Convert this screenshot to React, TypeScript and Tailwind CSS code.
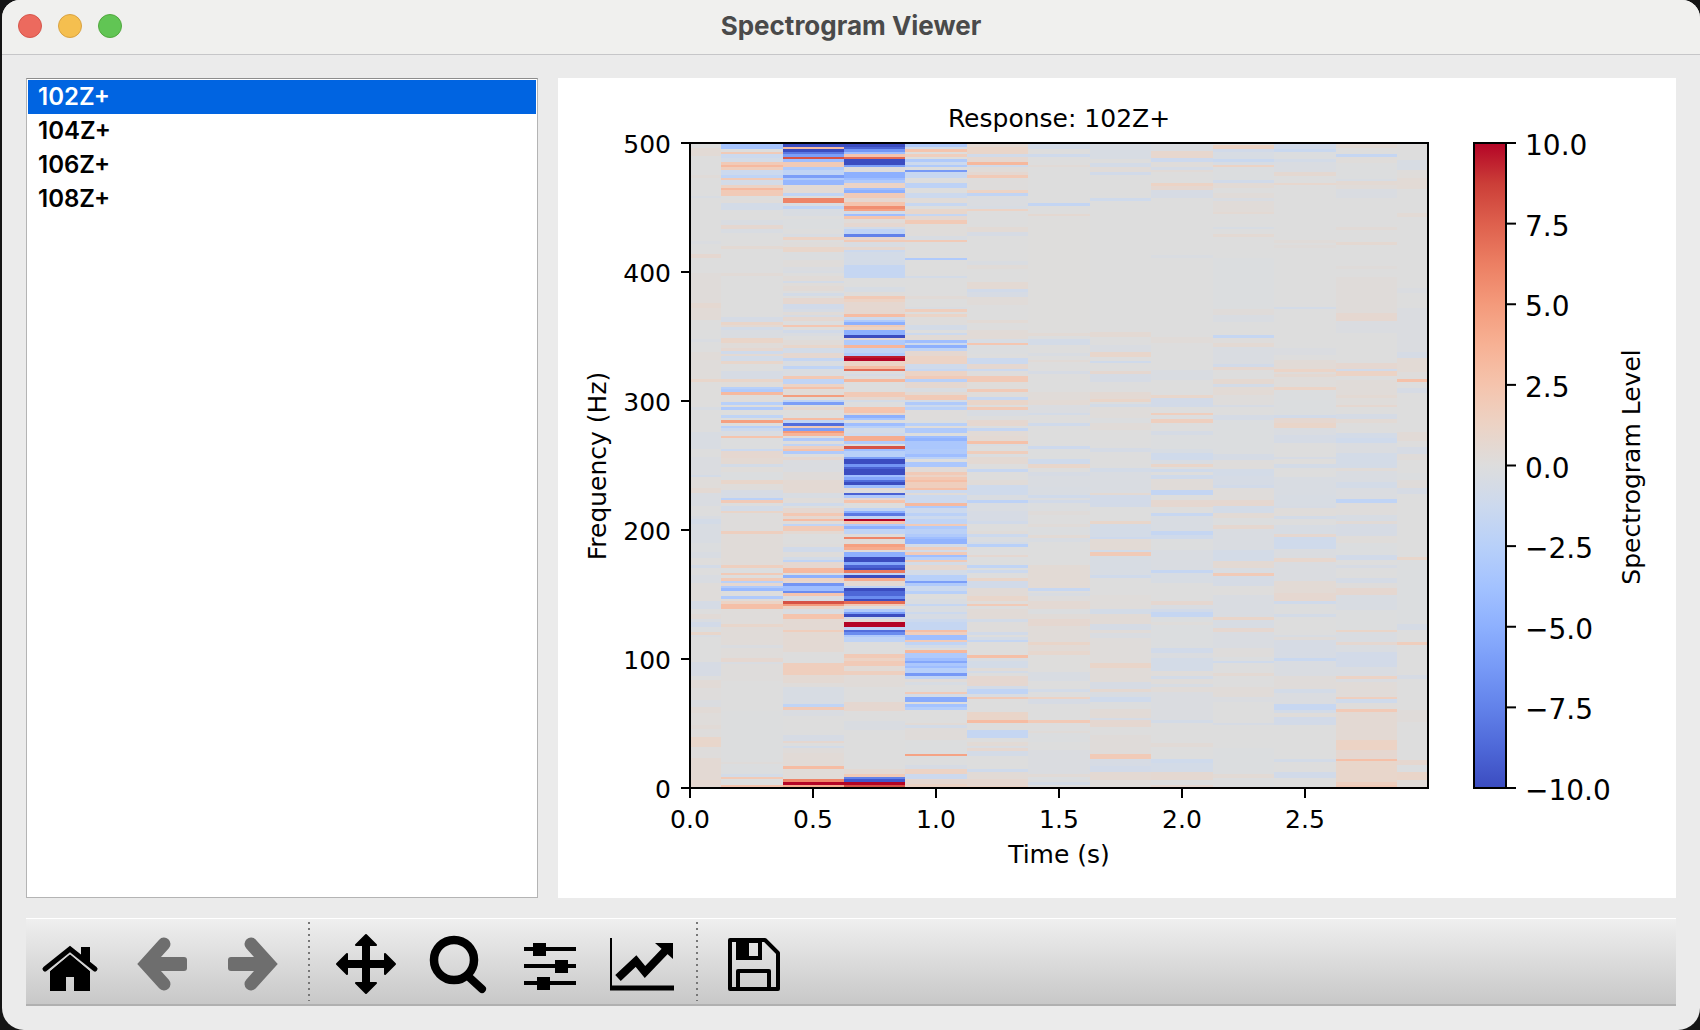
import React, { useState } from 'react'

interface Column {
    x: number
    width: number
    // alternating values: offset from the top of the axes, level from there on
    runs: number[]
}

const AXES = { left: 132, top: 65, width: 738, height: 645 }

const COLUMNS: Column[] = [
    {
        x: 132, width: 31,
        runs: [0, 0, 5, 0.7, 13, 0, 32, 0.5, 35, 0, 53, -0.6, 55, 0, 98, -0.4, 101, 0, 111, 1, 115, 0, 130, 0.4, 160, 0.9, 165, 0.6, 177, 0, 196, -0.5, 199, 0, 209, 0.5, 217, 0.3, 236, 1.2, 239, 0.1, 264, -0.6, 267, 0, 289, -0.6, 306, 0, 314, -0.4, 332, -1, 334, 0.3, 345, 0.8, 350, -0.5, 363, 0, 373, -0.5, 376, -1, 381, -0.6, 400, -0.3, 409, -0.6, 415, 0.1, 422, -1, 425, 0, 432, -0.5, 440, 0.3, 458, -0.9, 466, 0, 471, 0.6, 476, -0.5, 479, -1.1, 484, -0.3, 489, 1.2, 492, -0.5, 494, 0, 519, -0.8, 533, 0, 537, 0.6, 545, 0.2, 557, -0.4, 564, 0.6, 570, 0.3, 582, 0.6, 586, 0.2, 594, 1.2, 604, 0.2, 615, 0.8, 637, 1],
    },
    {
        x: 163, width: 62,
        runs: [0, -3.5, 6, 0, 9, 2, 11, -1.5, 15, -1, 19, 2, 22, 3.2, 24, 1.8, 27, -1.5, 32, -2, 35, 2, 37, -1, 42, 1.5, 45, 3.2, 47, 2, 53, 0, 57, 0.3, 60, -1, 67, 0, 77, -0.5, 82, 1, 86, -0.6, 90, 0, 103, 0.8, 106, 0, 130, 0.6, 133, 0, 174, -0.9, 179, 1.3, 182, 0.8, 184, -1, 187, -0.5, 195, 1.3, 200, 0.5, 205, 1, 208, -1.3, 211, 0.8, 213, -1, 218, 1.2, 221, 0, 228, -0.8, 236, 1.3, 239, 0.3, 244, -2.5, 246, -3, 249, 3.2, 252, 0.3, 259, -2.5, 262, 0, 264, -3, 267, 0, 272, -2, 275, 0, 277, 4.7, 280, 0, 283, -2.5, 285, -1.5, 288, -0.5, 293, 2.5, 295, -0.2, 306, -1.5, 308, 1, 315, 0.8, 321, -1, 324, 0.3, 329, -0.3, 337, 1.2, 341, 0.3, 347, -0.8, 355, -2.3, 357, 2, 360, 0, 363, -1, 368, 1.3, 370, 0.2, 388, 1.7, 391, 0.5, 422, 1.7, 425, -0.3, 430, 2, 432, 0, 435, 2, 438, -2.3, 440, 1, 443, -3, 445, -4.3, 448, 0, 453, -3, 456, 0.5, 458, 1.5, 461, 2.8, 466, 0.3, 481, 1.2, 484, 0.5, 502, -0.4, 505, 0.3, 515, 1, 519, -0.5, 521, 0.2, 538, 0, 568, -0.2, 619, 0.4, 621, -0.3, 631, -1, 634, 2, 636, 0, 642, 2.5],
    },
    {
        x: 225, width: 61,
        runs: [0, -10, 4, 3, 6, -10, 9, -8, 11, -6, 14, 8, 16, -4, 19, 2, 24, -3, 27, -2, 32, -6, 35, -3, 37, -4.5, 42, 0.7, 50, -2, 53, 0.3, 55, 6, 60, -0.5, 63, -2, 66, -0.6, 73, 0, 76, -0.3, 86, 0, 91, -0.6, 94, 1.5, 97, 0, 99, 0.3, 104, 1.2, 109, -0.3, 117, 0.3, 124, -0.4, 128, -0.6, 130, 0, 133, 0.5, 138, -1, 140, 0.3, 143, 0.6, 148, 0, 150, -1, 153, 0, 155, 1, 161, -1.2, 166, -0.8, 169, 0.5, 172, -0.8, 174, 1, 178, -0.2, 182, 2.3, 184, 0, 187, -1.2, 190, -0.5, 193, 0, 197, 0.5, 202, 1.2, 205, -1, 210, 1, 215, -1.8, 218, -0.5, 223, -2, 226, -0.5, 233, 2.2, 236, -2, 241, 1.5, 244, 2.7, 246, 0.5, 252, 4.8, 254, 0, 257, -2, 259, -6, 262, 0, 264, 1, 267, 0, 275, 3, 277, -2, 280, -8.5, 283, 2, 285, -6, 288, 5, 290, 3.5, 293, 0, 295, -3, 298, 0, 301, -2, 303, 1.7, 306, 2.7, 308, -3, 311, 0, 314, 1, 317, -0.4, 329, 0.4, 337, 0.8, 350, -0.6, 355, 0.3, 360, -1.3, 363, 0, 365, 1, 370, 2.2, 373, 1, 376, 3, 378, 0.5, 381, -2, 383, 2, 388, 0.8, 391, 0, 401, 0.2, 404, -1.2, 409, 0.2, 414, -1, 417, -2, 419, 1, 425, 3.2, 430, -0.5, 432, -5, 435, 1.5, 438, 1, 440, -6.5, 443, -4, 448, -7, 450, 2.5, 453, -0.5, 458, 8, 461, 5, 463, 1.5, 466, -0.5, 471, 2.5, 476, 0.8, 487, 1.8, 489, 0.8, 509, 0, 520, 1.8, 532, 0.8, 540, 0.3, 544, -0.7, 561, -2, 564, 2, 567, -0.5, 573, 0, 592, -0.8, 598, 1, 600, 0, 603, -1, 605, 0.4, 610, 0.6, 623, 3, 626, 0.5, 636, 6, 639, 10, 642, 4],
    },
    {
        x: 286, width: 61,
        runs: [0, -10, 4, -9, 6, -6.5, 9, -4, 11, 2.5, 14, 7, 16, -10, 22, -6, 24, 0.3, 29, -5, 35, -4, 37, -3, 40, 1.5, 45, -4, 47, -5, 50, 2, 55, 1, 59, 2.5, 63, 5.5, 66, 4.5, 68, -1, 71, -4, 73, 2.5, 76, 0.5, 80, 1, 84, -1, 86, -2, 91, -7.5, 94, 1, 97, 2, 99, -0.5, 104, 1, 107, -1.5, 109, -1, 122, -1.8, 135, 0, 144, -0.7, 149, 0.3, 153, 2, 156, 1.5, 159, 1, 171, 3, 174, -1.5, 177, -3, 179, -5, 182, 2, 184, 1.5, 187, -5, 192, -10, 195, 1, 197, -3, 202, 3.5, 205, -2, 210, -3, 213, 9.5, 215, 10, 218, 1.5, 223, 3, 226, 7, 228, 0, 231, -0.8, 233, 0, 236, 3.3, 239, 0, 249, 2, 254, 1, 257, -1, 259, 0, 264, 2.5, 270, 1, 272, -5, 275, -3.5, 277, 0, 280, -4, 283, -2.5, 285, -1, 290, -1.5, 293, 4, 298, -3, 301, 0, 303, 8, 306, -4, 308, -2.5, 314, -6, 316, -10, 321, -6.5, 324, -9, 326, -10, 332, -4, 334, -5.5, 337, -8.5, 339, -10, 342, -4, 345, 1, 347, 0, 350, -9, 352, -3, 355, 1, 357, 2.5, 360, 0, 365, -2, 368, -5, 370, -8, 373, -2, 376, 10, 378, 2.5, 381, -3, 383, -5, 386, -2, 391, 0.5, 394, 6, 396, 0.5, 401, 4.7, 404, 4, 407, 0.5, 409, -5, 414, -10, 419, -5.5, 422, -9, 425, -10, 427, 6.5, 430, -2, 432, -10, 435, 4, 438, 0.8, 443, -2, 445, -10, 448, -8.8, 453, -7, 456, -10, 458, 7, 461, 2, 463, 0, 466, -3, 469, -6, 471, -10, 474, -1.5, 476, 0.5, 479, 10, 484, -2, 487, -8.5, 489, -7, 492, -3, 494, -2, 499, 0, 511, 2, 515, 1.5, 518, 2, 523, 0.7, 528, 1.7, 532, 0.5, 544, 0, 559, 1, 568, 0, 578, -0.5, 587, 0, 626, 0.8, 631, 2, 634, -7.5, 636, -9.5, 639, 10, 642, 8],
    },
    {
        x: 347, width: 62,
        runs: [0, -3, 4, -1, 6, 2.5, 9, 0, 11, 1.8, 14, 0, 16, -3, 19, -1.5, 22, -3, 24, 0, 27, -6.3, 29, -1.7, 35, 0, 40, -2.2, 45, 0, 50, -1.5, 55, 0.5, 60, -1.7, 63, 0, 66, 1.2, 71, -1.8, 73, 1, 77, 2, 81, 0.3, 93, -0.6, 97, 2, 99, 0, 115, -3, 117, 0, 133, -1, 135, 0, 153, 0.6, 156, 0, 164, -0.5, 166, 1.8, 169, 0, 171, 1.4, 174, 0.2, 182, -1, 187, 0, 190, -1.5, 192, 0.6, 197, -4, 200, -1.5, 202, -5, 205, -2, 208, 1, 213, 1.5, 221, -1.3, 226, -1.7, 228, 1.5, 233, 2, 236, -2.5, 239, 1, 245, -0.5, 249, 0.8, 252, 2, 257, -1, 259, -3, 262, -1.5, 264, -2.3, 267, 0.2, 277, -0.2, 280, -2.5, 283, 0.3, 285, -3, 290, 0, 293, -4, 295, -4.7, 298, -3.3, 306, -3, 311, -4, 314, -2.3, 316, 0, 319, -3.3, 324, 0.6, 329, 2, 332, 1.5, 334, 2.2, 337, 2.8, 339, 1.8, 345, 2.8, 347, -1.5, 350, 0.5, 352, -1.5, 360, 3.2, 363, -3, 365, -1.5, 370, -2.3, 373, -1.5, 376, -2, 381, 2, 383, -3, 386, -2.3, 391, -3, 394, -4, 396, -4.8, 401, -1, 404, 1.8, 407, -1, 409, 2, 412, -4, 414, -2.5, 417, 2, 419, -1, 422, 1, 427, -1, 432, -2.5, 438, -6, 440, -3, 443, -1.5, 448, -2.5, 451, 0, 456, -0.5, 461, -1.8, 463, -0.5, 469, -1.5, 471, -0.8, 476, -1.5, 479, -1.8, 487, 2.8, 489, 1.8, 492, -4, 497, 2, 499, -2, 502, -1, 505, 0, 507, 3.3, 510, -3, 515, -4, 518, -5.5, 520, -3.3, 523, -4, 525, -2.5, 530, -6.3, 533, -2, 536, 0.5, 539, -0.7, 542, 0, 549, 2, 551, -1, 554, -5.3, 559, 0, 561, -3.7, 564, -2.7, 567, 0, 580, 0.6, 582, -1, 585, 0.4, 597, -0.2, 611, 4.5, 613, -0.2, 622, -0.8, 626, 1.5, 631, -1.5, 636, 1, 641, 1.5],
    },
    {
        x: 409, width: 61,
        runs: [0, 0.8, 4, 1.3, 11, -1.2, 14, 1, 19, 3.3, 22, -1.3, 24, 0.5, 29, 1, 32, 2, 35, 0.2, 47, 1.5, 50, -2, 53, -0.4, 63, -0.7, 66, 1.5, 68, 0, 84, 0.7, 89, -0.8, 93, 0, 118, -0.5, 122, 0.5, 126, 0, 139, 0.8, 146, -1.2, 149, -0.8, 154, 0.5, 162, 0, 177, 0.7, 180, 0, 187, 0.6, 196, -0.7, 200, 2.3, 202, -0.3, 211, 0, 215, -1.5, 221, 1, 226, -1.5, 228, 0.2, 233, 2, 239, 0.3, 246, 2, 249, 0.3, 254, -1.7, 257, 1.3, 262, 0, 264, 2, 267, -0.6, 273, 0, 277, 1, 283, -0.3, 285, -1.8, 288, 0.6, 293, 0.8, 298, 2.7, 301, -0.5, 303, 0, 308, 1.8, 311, -0.3, 314, 0.8, 321, 0, 326, -1.7, 329, 0, 337, 0.5, 342, -1.3, 352, -0.5, 357, -2.2, 360, -0.5, 368, -0.8, 378, -1.2, 381, 0, 388, 0.4, 391, -1.5, 394, -0.5, 399, -1, 401, -2.5, 404, 0, 412, 1, 414, -0.2, 422, -2, 425, -0.3, 427, -1.5, 430, 0, 435, 1.3, 438, -1.2, 445, 0.6, 453, 1.2, 458, 0.3, 461, 2, 463, 0, 466, 0.6, 476, -1, 479, 0.2, 489, -1.2, 492, 0, 494, -1, 497, -1.8, 499, 0.1, 512, 2.8, 515, -0.5, 518, -1, 525, 0.5, 528, -1, 530, 0, 533, 1, 543, -1, 546, -2, 551, -0.5, 554, 2, 556, 0, 569, 1.3, 577, 3, 580, 0, 587, -1.8, 595, 0, 599, 0.7, 603, -0.5, 605, 1, 608, -1, 613, 0, 626, -1.3, 629, 0.6, 636, 1, 643, 1.5],
    },
    {
        x: 470, width: 62,
        runs: [0, -1, 6, 0, 11, -1.3, 14, 0, 22, 0.6, 24, 0, 60, -1.9, 63, 0, 71, 0.9, 73, 0.1, 190, 0.7, 193, -0.2, 196, -1, 202, 0, 210, -0.6, 213, 0, 217, 0.6, 219, 0, 228, -0.8, 231, 0, 249, 0.5, 257, 0.7, 262, -0.4, 270, -1, 272, 0, 280, -1.3, 283, 0, 303, -1.4, 306, -0.2, 316, -1.3, 321, 1.2, 325, 0, 329, -0.8, 333, -0.5, 344, -0.6, 352, -1.3, 355, -0.4, 357, -1.2, 360, -0.3, 368, 0.4, 372, 0, 381, 0.5, 384, -0.3, 392, 0.7, 395, -0.6, 399, 0, 422, 0.7, 445, -1.7, 448, 0, 450, -0.6, 453, 0.2, 458, 0.8, 466, -0.3, 471, 0.5, 476, 1, 483, 0.5, 499, 1.3, 502, 0.7, 508, 1.1, 512, 0.1, 529, -0.6, 538, 0, 546, -1, 549, 0, 554, 1.5, 556, -0.8, 561, 0, 577, 2, 580, 0, 588, 0.5, 590, -0.3, 599, 0, 607, -0.4, 631, 0.6, 634, -0.3, 639, -1, 642, 0],
    },
    {
        x: 532, width: 61,
        runs: [0, -0.7, 16, 0, 20, -1, 24, 0.5, 29, -1.2, 32, 0, 55, -1.3, 58, 0, 189, 0.8, 194, 0, 202, -0.5, 209, 1.2, 214, 0, 218, -1.3, 220, 0, 228, 1, 231, -0.8, 239, 0, 249, 0.8, 256, 1.3, 259, -0.3, 261, -1, 264, 0.3, 275, -0.3, 280, 0.5, 287, 0, 305, -0.9, 309, 0, 325, -1, 329, -0.5, 342, -0.5, 350, 0.8, 352, -1.1, 364, 0, 378, 1.2, 381, -1, 394, -1.4, 396, 0.7, 407, -1, 409, 2, 413, -0.7, 432, -1.3, 435, 0, 452, 0.3, 466, -1, 471, 0.6, 481, -0.9, 487, 0.5, 490, -0.5, 495, 0.3, 520, 1.3, 525, 0.5, 539, -0.8, 546, 0.9, 549, -0.6, 554, -1.3, 559, -0.2, 566, 0.6, 575, -0.8, 577, 1, 584, 0, 592, 0.4, 611, 2, 616, -0.8, 623, -1.1, 629, 0.8, 637, 0.3],
    },
    {
        x: 593, width: 62,
        runs: [0, -0.4, 8, 1.1, 15, -1.4, 19, 0.3, 24, -0.9, 27, 0.6, 29, 0, 40, 1.5, 43, 1, 47, -0.8, 55, 0, 112, -0.5, 115, 0, 194, 0.5, 200, 0, 227, -0.5, 237, 0, 252, 1.2, 255, -1.1, 264, 0, 270, 1.8, 272, -0.2, 276, 1.7, 280, 0, 288, -0.9, 292, -0.3, 306, -0.7, 310, -1.3, 317, -0.6, 321, 1.3, 324, 0, 326, -1.3, 329, 0, 332, -1.3, 336, 0.5, 347, -1.9, 352, 0, 357, 1, 364, 0, 370, -1.7, 373, -0.6, 388, -1.8, 392, -1.3, 396, -0.1, 407, -0.5, 427, -1.8, 430, -0.7, 440, 0, 458, 1, 462, -0.5, 466, -1.2, 469, -1.8, 474, -0.3, 479, 0.3, 482, -0.3, 505, -1.2, 510, -0.4, 515, -1, 528, 0.3, 533, -1, 536, 0.3, 541, -0.7, 544, 0.5, 549, -0.4, 577, -1, 580, 0, 600, 0.6, 604, 0, 616, -1.3, 620, -1, 629, 0.9, 637, -0.2, 642, 1],
    },
    {
        x: 655, width: 61,
        runs: [0, 0, 2, 1.5, 6, -1.2, 9, -0.7, 16, -1.6, 19, -0.7, 22, 1.5, 24, -0.3, 37, -1.2, 40, 0.7, 45, 0, 50, 0.5, 55, -0.5, 58, 0.5, 69, 0.8, 71, 0, 84, -0.7, 86, 0, 91, 0.8, 94, 0, 115, -0.3, 166, 0.4, 172, -0.5, 179, 0, 192, -1.8, 195, 0.2, 200, 0.8, 204, -0.5, 221, -1.2, 224, 1, 227, 0, 236, 0.9, 241, -1, 244, 0.7, 252, 0.2, 262, -0.8, 264, 0, 272, -0.9, 277, -0.3, 311, -0.9, 317, 0.2, 326, -1, 333, -0.9, 342, -1.2, 345, 0.3, 357, 1, 363, -1, 370, 0.7, 375, -0.2, 382, 1, 386, -0.5, 407, -1, 418, 0.8, 425, -0.5, 430, 2, 433, -0.9, 443, 0.1, 452, -0.5, 474, 1.3, 477, -0.7, 485, 1, 489, -0.5, 505, 0.2, 514, -0.3, 518, -1.3, 520, 0, 530, 0.8, 533, 0, 544, 0.5, 554, -0.4, 559, 0, 580, -0.8, 582, 0, 605, -0.3, 631, 0.7, 635, -0.2],
    },
    {
        x: 716, width: 62,
        runs: [0, -1.2, 6, -1.6, 9, -0.3, 16, -1, 19, -0.5, 29, 0.9, 33, 0, 40, 1.1, 42, 0, 97, 0.5, 100, 0, 102, 0.4, 105, 0, 164, -1, 166, 0, 205, -0.4, 212, 0, 217, 0.6, 226, 1.4, 229, 0.4, 231, 0.9, 234, 0.3, 244, 1.4, 247, -0.3, 272, -1.2, 275, 1, 280, 1.3, 285, -0.5, 292, -0.9, 300, 0, 314, -0.8, 316, 0.1, 321, -1, 325, 0, 334, -0.6, 352, -0.7, 363, -0.8, 365, 0.3, 373, -1, 376, 0, 382, -0.7, 391, 1, 394, -1.3, 406, -0.4, 415, 1.1, 419, -0.4, 438, 0.7, 450, 1, 458, -1.3, 461, -0.2, 471, -1, 474, 0, 492, -0.6, 494, 0.4, 497, -0.8, 515, -1.6, 518, -0.5, 533, 0.4, 546, -1, 550, -0.4, 561, -1.7, 567, -1, 570, 0.3, 574, -1.1, 582, 0, 616, -1, 619, 0, 629, -1.2, 635, 0],
    },
    {
        x: 778, width: 61,
        runs: [0, 0.7, 5, 0, 11, -1.8, 14, 0.3, 20, -0.2, 36, -0.6, 38, 0.8, 42, 0.5, 46, -0.5, 55, 0, 84, 0.6, 87, 0, 99, 0.9, 102, 0, 123, 0.4, 126, 0, 134, 0.4, 170, 1, 178, -0.4, 190, 0, 220, 1, 226, -1.2, 228, 1.5, 233, 0, 237, 0.5, 252, 0.8, 255, 0.3, 262, 1, 264, 0, 271, -0.9, 276, 0.7, 280, 0, 290, -1, 295, -1.3, 300, -0.4, 310, -1, 325, 0.5, 328, -0.5, 339, -1, 345, -0.4, 356, -2, 360, 0.2, 372, -0.7, 378, 0.6, 381, -0.8, 393, 0.3, 400, -0.3, 412, -1.2, 417, 0, 422, -0.8, 425, 0, 435, -0.9, 440, 0.2, 445, 1, 452, -0.6, 467, -0.2, 487, 1.3, 489, -0.5, 499, 1, 502, -0.5, 509, -1.1, 524, -0.5, 533, 1.5, 536, -0.4, 539, 0.5, 554, 1.7, 556, -1.3, 560, 0.2, 566, 2, 569, 0.8, 597, 1.5, 607, 1, 616, 2.8, 618, 1.2, 639, 1.7, 642, 2],
    },
    {
        x: 839, width: 31,
        runs: [0, 0.2, 7, 0, 17, -0.7, 27, 0.3, 35, 0.7, 46, 0, 70, 0.7, 74, 0, 145, -0.4, 150, 0, 165, -0.4, 209, -0.9, 215, 0.7, 229, 0.2, 236, 2.7, 239, 0, 245, -0.8, 250, 0, 289, 0.6, 298, 0, 304, -0.8, 311, 0.4, 317, 0, 330, -0.3, 337, 0.4, 345, -0.8, 351, 0, 414, 1.2, 417, -0.3, 481, -0.9, 487, 0, 499, 1.8, 502, 0, 532, -0.8, 536, 0, 567, 0.4, 579, 0, 617, 1, 622, -0.3, 629, 1.3, 637, 0.5],
    },
]

// diverging blue-grey-red map, evenly spaced from -10 to 10
const COLORMAP = [
    [59, 76, 192],
    [78, 104, 216],
    [98, 130, 234],
    [119, 154, 247],
    [141, 176, 254],
    [163, 194, 255],
    [184, 208, 249],
    [204, 217, 238],
    [221, 221, 221],
    [236, 211, 197],
    [245, 196, 173],
    [247, 177, 148],
    [244, 154, 123],
    [236, 127, 99],
    [222, 96, 77],
    [203, 62, 56],
    [180, 4, 38],
]

const levelColor = (raw: number) => {
    // keep the noise floor close to grey
    const level = Math.abs(raw) < 2 ? raw * (0.4 + 0.3 * Math.abs(raw)) : raw
    const pos = ((level + 10) / 20) * (COLORMAP.length - 1)
    const i = Math.min(Math.floor(pos), COLORMAP.length - 2)
    const t = pos - i
    const [r, g, b] = COLORMAP[i].map((c, k) => Math.round(c + (COLORMAP[i + 1][k] - c) * t))
    return `rgb(${r},${g},${b})`
}

const CHANNELS = ['102Z+', '104Z+', '106Z+', '108Z+']
const FREQUENCIES = [0, 100, 200, 300, 400, 500]
const TIMES = ['0.0', '0.5', '1.0', '1.5', '2.0', '2.5']
const LEVELS = ['10.0', '7.5', '5.0', '2.5', '0.0', '−2.5', '−5.0', '−7.5', '−10.0']

const Spectrogram: React.FC<{ channel: string }> = ({ channel }) => {
    const { left, top, width, height } = AXES
    const bottom = top + height

    return (
        <svg
            viewBox="0 0 1118 820"
            className="block w-full font-['DejaVu_Sans',sans-serif]"
            role="img"
            aria-label={`Response: ${channel}`}
        >
            <defs>
                <linearGradient id="levels" x1="0" y1="1" x2="0" y2="0">
                    {COLORMAP.map((c, i) => (
                        <stop key={i} offset={i / (COLORMAP.length - 1)} stopColor={`rgb(${c.join(',')})`} />
                    ))}
                </linearGradient>
            </defs>

            <text x={left + width / 2} y="49" textAnchor="middle" fontSize="25">Response: {channel}</text>

            <g shapeRendering="crispEdges">
                {COLUMNS.map((col) =>
                    col.runs.map((start, i) => {
                        if (i % 2) return null
                        const end = col.runs[i + 2] ?? height
                        return (
                            <rect
                                key={`${col.x}-${i}`}
                                x={col.x}
                                y={top + start}
                                width={col.width}
                                height={end - start}
                                fill={levelColor(col.runs[i + 1])}
                            />
                        )
                    })
                )}
                <rect x={left} y={top} width={width} height={height} fill="none" stroke="#000" strokeWidth="2" />
                <rect x="916" y={top} width="32" height={height} fill="url(#levels)" stroke="#000" strokeWidth="2" />
            </g>

            {/* frequency axis */}
            {FREQUENCIES.map((f) => {
                const y = bottom - (f / 500) * height
                return (
                    <g key={f}>
                        <path d={`M${left - 9} ${y}H${left}`} stroke="#000" strokeWidth="2" />
                        <text x="113" y={y + 10} textAnchor="end" fontSize="25">{f}</text>
                    </g>
                )
            })}
            <text transform="translate(48 388) rotate(-90)" textAnchor="middle" fontSize="25">Frequency (Hz)</text>

            {/* time axis */}
            {TIMES.map((t, i) => {
                const x = left + i * 123
                return (
                    <g key={t}>
                        <path d={`M${x} ${bottom}V${bottom + 10}`} stroke="#000" strokeWidth="2" />
                        <text x={x} y="750" textAnchor="middle" fontSize="25">{t}</text>
                    </g>
                )
            })}
            <text x={left + width / 2} y="785" textAnchor="middle" fontSize="25">Time (s)</text>

            {/* colour bar scale */}
            {LEVELS.map((l, i) => {
                const y = top + (i * height) / 8
                return (
                    <g key={l}>
                        <path d={`M948 ${y}H958`} stroke="#000" strokeWidth="2" />
                        <text x="967" y={y + 12} fontSize="28">{l}</text>
                    </g>
                )
            })}
            <text transform="translate(1082 389) rotate(-90)" textAnchor="middle" fontSize="25">Spectrogram Level</text>
        </svg>
    )
}

const ToolButton: React.FC<{ label: string; disabled?: boolean; children: React.ReactNode }> = ({ label, disabled, children }) => (
    <button
        type="button"
        aria-label={label}
        disabled={disabled}
        className="flex w-[92px] items-center justify-center pt-1 pr-1 text-black disabled:text-[#6e6e6e]"
    >
        <svg viewBox="0 0 64 64" width="64" height="64" fill="none" stroke="currentColor">
            {children}
        </svg>
    </button>
)

const Separator = () => (
    <div className="flex w-5 py-[3px] pl-[6px]">
        <svg width="2" height="100%" aria-hidden="true">
            <line x1="1" y1="0" x2="1" y2="100%" stroke="#777" strokeWidth="2" strokeDasharray="2 4" />
        </svg>
    </div>
)

const App: React.FC = () => {
    const [channel, setChannel] = useState('102Z+')

    return (
        <div className="min-h-screen bg-[#141414] pl-[2px]">
            <div className="flex min-h-screen flex-col overflow-hidden rounded-t-[18px] rounded-b-[22px] bg-[#ebebeb] font-['Inter',sans-serif]">
                <header className="relative flex h-[55px] items-center justify-center border-b border-[#c6c6c8] bg-[#f0f0ee] pb-[2px]">
                    <div className="absolute top-[14px] left-4 flex gap-4">
                        <button type="button" aria-label="Close" className="h-6 w-6 rounded-full border border-[#d5564c] bg-[#ec6a5e]" />
                        <button type="button" aria-label="Minimise" className="h-6 w-6 rounded-full border border-[#d8a242] bg-[#f5bf4f]" />
                        <button type="button" aria-label="Zoom window" className="h-6 w-6 rounded-full border border-[#51a73e] bg-[#61c554]" />
                    </div>
                    <h1 className="text-[26px] leading-8 font-bold text-[#4a4a4a]">Spectrogram Viewer</h1>
                </header>

                <main className="flex flex-1 flex-col gap-5 px-6 pt-[23px] pb-6">
                    <div className="flex gap-5">
                        <ul className="flex-[508_1_0%] border border-[#b4b4b4] border-t-[#8c8c8c] bg-white p-px">
                            {CHANNELS.map((name) => (
                                <li key={name}>
                                    <button
                                        type="button"
                                        onClick={() => setChannel(name)}
                                        className={`block h-[34px] w-full px-[10px] text-left text-[24px] leading-[34px] font-semibold ${
                                            name === channel ? 'bg-[#0064e1] text-white' : 'text-black'
                                        }`}
                                    >
                                        {name}
                                    </button>
                                </li>
                            ))}
                        </ul>
                        <section className="flex-[1118_1_0%] bg-white">
                            <Spectrogram channel={channel} />
                        </section>
                    </div>

                    <div role="toolbar" aria-label="Plot tools" className="flex h-[88px] border-t border-b-2 border-t-white border-b-[#b0b0b0] bg-linear-to-b from-[#efefef] to-[#c8c8c8]">
                        <ToolButton label="Home">
                            <path d="M12 59V39L32 22 52 39V59H36V45H28V59Z" fill="currentColor" stroke="none" />
                            <path d="M43 15H52V32L43 25Z" fill="currentColor" stroke="none" />
                            <path d="M8 41 32 21 56 41" stroke="#d4d4d4" strokeWidth="2" />
                            <path d="M7 37 32 17 57 37" strokeWidth="5" strokeLinecap="round" />
                        </ToolButton>
                        <ToolButton label="Back" disabled>
                            <path d="M34 12 16 32 34 52" strokeWidth="13" strokeLinecap="round" />
                            <rect x="14" y="25" width="43" height="14" rx="3" fill="currentColor" stroke="none" />
                        </ToolButton>
                        <ToolButton label="Forward" disabled>
                            <path d="M29 12 47 32 29 52" strokeWidth="13" strokeLinecap="round" />
                            <rect x="6" y="25" width="43" height="14" rx="3" fill="currentColor" stroke="none" />
                        </ToolButton>
                        <Separator />
                        <ToolButton label="Pan">
                            <path d="M32 8V56M8 32H56" strokeWidth="8" />
                            <path
                                d="M32 3 42 13H22ZM32 61 42 51H22ZM3 32 13 22V42ZM61 32 51 22V42Z"
                                fill="currentColor"
                                strokeWidth="2"
                                strokeLinejoin="round"
                            />
                        </ToolButton>
                        <ToolButton label="Zoom">
                            <circle cx="28" cy="28" r="20" strokeWidth="8.5" />
                            <path d="M44 46 56 57" strokeWidth="8" strokeLinecap="round" />
                        </ToolButton>
                        <ToolButton label="Configure subplots">
                            <path d="M6 17H58M6 34H58M6 51H58" strokeWidth="4" />
                            <path d="M15 11H28V24H15ZM37 28H50V41H37ZM19 45H32V58H19Z" fill="currentColor" stroke="none" />
                        </ToolButton>
                        <ToolButton label="Edit axes">
                            <path d="M1 6V56" strokeWidth="2" />
                            <path d="M0 56H64" strokeWidth="5" />
                            <path d="M8 46 26 29 35 40 56 18" strokeWidth="8" />
                            <path d="M45 11H63V27Z" fill="currentColor" stroke="none" />
                        </ToolButton>
                        <Separator />
                        <ToolButton label="Save">
                            <path d="M8 8H43L56 21V57H8Z" strokeWidth="4" strokeLinejoin="round" />
                            <path d="M14 9H40V28H14ZM27 11V24H36V11Z" fill="currentColor" fillRule="evenodd" stroke="none" />
                            <path d="M16 57V39H47V57" strokeWidth="4" strokeLinejoin="round" />
                        </ToolButton>
                    </div>
                </main>
            </div>
        </div>
    )
}

export default App
